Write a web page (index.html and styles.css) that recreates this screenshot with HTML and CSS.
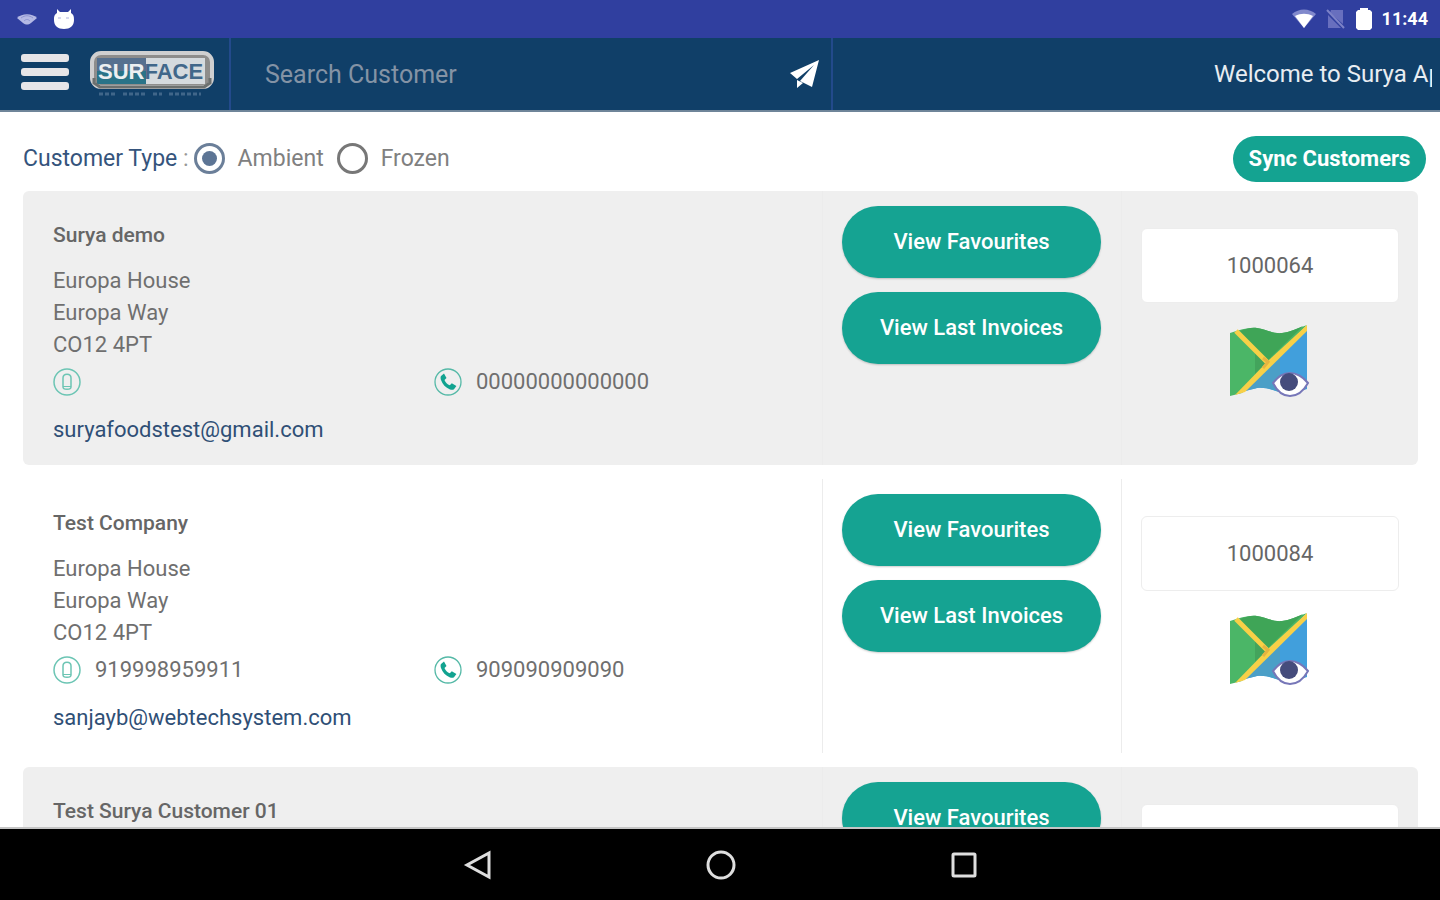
FILE: index.html
```html
<!DOCTYPE html>
<html lang="en">

<head>
    <meta charset="UTF-8">
    <meta name="viewport" content="width=device-width, initial-scale=1.0">
    <title>Surface - Customers</title>
    <link rel="stylesheet" href="styles.css">
</head>

<body>
    <!-- shared icons -->
    <svg class="icon-defs" aria-hidden="true">
        <symbol id="icon-mobile" viewBox="0 0 28 28">
            <circle cx="14" cy="14" r="13" fill="none" stroke="#6cc5b4" stroke-width="1.5"/>
            <path d="M10 10c0-5 8-5 8 0v9c0 3-8 3-8 0z" fill="none" stroke="#6cc5b4" stroke-width="1.5"/>
            <path d="M10 18.5h8" stroke="#6cc5b4"/>
        </symbol>
        <symbol id="icon-phone" viewBox="0 0 28 28">
            <circle cx="14" cy="14" r="13" fill="none" stroke="#55b9a7" stroke-width="1.3"/>
            <path d="M7 8l3-2.500 2.500 4.500-2 2c1 2.500 2.800 4.300 5.300 5.300l2-2 4.600 2.700-2.400 3.200c-1 .8-2.500.8-4 .2C11.500 19.500 8.500 16.500 7 12c-.5-1.500-.6-3 0-4z" fill="#12a390"/>
        </symbol>
        <symbol id="icon-map" viewBox="0 0 80 74">
            <path d="M0 8C10 5 19 2 27 3s16 6 25 5 16-5 25-8L38 40 12 68 0 71z" fill="#4bb667"/>
            <path d="M10 6c6-2 11-4 17-3 9 1 16 6 25 5 8-1 14-4 21-7L37 36z" fill="#3fa557"/>
            <path d="M25 28l11 10-11 11z" fill="#43a45c"/>
            <path d="M77 4v60c-9 3-15 5-23 4s-16-6-27-5l-12 3z" fill="#419fdc"/>
            <path d="M50 31v36c-8-2-13-5-23-4l-12 3z" fill="#4b9fc7"/>
            <path d="M6 6l31 31" stroke="#f8d047" stroke-width="5"/>
            <path d="M77 0v6L15 67l-10 3 35-36z" fill="#f8d047"/>
            <path d="M33 33l5 4-5 6" fill="none" stroke="#e6b441" stroke-width="3"/>
            <path d="M43 58c6-7 10-10 17-10s13 4 18 10c-5 9-11 13-18 13s-13-5-17-13z" fill="#fff" stroke="#7777b8" stroke-width="2"/>
            <circle cx="59" cy="57" r="9" fill="#454c7c"/>
        </symbol>
    </svg>

    <div class="status-bar">
        <svg class="status-icons" width="60" height="24" viewBox="0 0 60 24">
            <path d="M1 11c5-5 15-5 20 0l-6 5c-3 2-5 2-8 0z" fill="#b4b9e4"/>
            <path d="M5 11c4-3 8-3 12 0M8 14c2-2 4-2 6 0" fill="none" stroke="#8d94d2"/>
            <path d="M41 2l3 3h8l3-3v4c3 2 3 4 3 7 0 6-4 9-10 9s-10-3-10-9c0-3 0-5 3-7z" fill="#fff"/>
            <path d="M42 11h3M50 11h3" stroke="#aeb3df"/>
        </svg>
        <div class="status-right">
            <svg width="24" height="20" viewBox="0 0 24 20">
                <path d="M0 5C7-1 17-1 24 5L12 19z" fill="#8189cc"/>
                <path d="M3 7c6-3 12-3 18 0l-9 12z" fill="#fff"/>
            </svg>
            <svg width="20" height="20" viewBox="0 0 20 20">
                <path d="M5 1h12v14L4 4zM2 6l13 13H2z" fill="#686fbe"/>
                <path d="M1 1l17 18" stroke="#7c82c7" stroke-width="2"/>
            </svg>
            <svg width="16" height="22" viewBox="0 0 16 22">
                <path d="M4 0h8v2h2l2 2v16l-2 2H2l-2-2V4l2-2h2z" fill="#fff"/>
            </svg>
            <span class="clock">11:44</span>
        </div>
    </div>

    <header class="header">
        <div class="brand">
            <button class="menu-button" type="button" aria-label="Menu">
                <span></span>
                <span></span>
                <span></span>
            </button>
            <svg class="logo" width="126" height="50" viewBox="0 0 126 50">
                <rect x="3" y="4" width="120" height="34" rx="9" fill="#8e8d8c" stroke="#cfcfd0" stroke-width="4"/>
                <path d="M8 9h49v26H8z" fill="#56708f"/>
                <path d="M8 22h49v13H8z" fill="#2a7388"/>
                <path d="M57 9h59v26H57z" fill="#d5dade"/>
                <path d="M5 29v5l6 4h104l6-4v-5" fill="none" stroke="#6c706f" stroke-width="3"/>
                <text class="logo-text" x="9" y="30" fill="#eceff1">SUR<tspan fill="#41678a">FACE</tspan></text>
                <path d="M10 45h16M34 45h24M64 45h9M80 45h32" stroke="#406689" stroke-width="3" stroke-dasharray="4 2"/>
            </svg>
        </div>
        <form class="search">
            <input class="search-input" type="text" placeholder="Search Customer" aria-label="Search Customer">
            <button class="send-button" type="button" aria-label="Search">
                <svg width="30" height="30" viewBox="0 0 30 30">
                    <path d="M30 1L1 14l7 6L25 6 11 22l12 6zM8 21v8l6-5z" fill="#fff"/>
                </svg>
            </button>
        </form>
        <div class="welcome">Welcome to Surya Ap</div>
    </header>

    <main class="content">
        <div class="toolbar">
            <fieldset class="customer-type">
                <legend class="type-label">Customer Type <span>:</span></legend>
                <label><input type="radio" name="type" checked>Ambient</label>
                <label><input type="radio" name="type">Frozen</label>
            </fieldset>
            <button class="sync-button" type="button">Sync Customers</button>
        </div>

        <div class="customer-list">
            <article class="customer shaded">
                <div class="info">
                    <h2>Surya demo</h2>
                    <address>Europa House<br>Europa Way<br>CO12 4PT</address>
                    <div class="phones">
                        <div class="phone"><svg><use href="#icon-mobile"/></svg></div>
                        <div class="phone"><svg><use href="#icon-phone"/></svg>00000000000000</div>
                    </div>
                    <a class="email" href="mailto:suryafoodstest@gmail.com">suryafoodstest@gmail.com</a>
                </div>
                <div class="actions">
                    <button class="action-button" type="button">View Favourites</button>
                    <button class="action-button" type="button">View Last Invoices</button>
                </div>
                <div class="account">
                    <input class="code" type="text" value="1000064" aria-label="Customer code" readonly>
                    <button class="map-button" type="button" aria-label="View map"><svg><use href="#icon-map"/></svg></button>
                </div>
            </article>

            <article class="customer">
                <div class="info">
                    <h2>Test Company</h2>
                    <address>Europa House<br>Europa Way<br>CO12 4PT</address>
                    <div class="phones">
                        <div class="phone"><svg><use href="#icon-mobile"/></svg>919998959911</div>
                        <div class="phone"><svg><use href="#icon-phone"/></svg>909090909090</div>
                    </div>
                    <a class="email" href="mailto:sanjayb@webtechsystem.com">sanjayb@webtechsystem.com</a>
                </div>
                <div class="actions">
                    <button class="action-button" type="button">View Favourites</button>
                    <button class="action-button" type="button">View Last Invoices</button>
                </div>
                <div class="account">
                    <input class="code" type="text" value="1000084" aria-label="Customer code" readonly>
                    <button class="map-button" type="button" aria-label="View map"><svg><use href="#icon-map"/></svg></button>
                </div>
            </article>

            <article class="customer shaded">
                <div class="info">
                    <h2>Test Surya Customer 01</h2>
                </div>
                <div class="actions">
                    <button class="action-button" type="button">View Favourites</button>
                </div>
                <div class="account">
                    <input class="code" type="text" aria-label="Customer code" readonly>
                </div>
            </article>
        </div>
    </main>

    <nav class="nav-bar">
        <button type="button" aria-label="Back">
            <svg width="32" height="32" viewBox="0 0 32 32"><path d="M28 4v24L6 16z"/></svg>
        </button>
        <button type="button" aria-label="Home">
            <svg width="32" height="32" viewBox="0 0 32 32"><circle cx="17" cy="16" r="13"/></svg>
        </button>
        <button type="button" aria-label="Recent apps">
            <svg width="32" height="32" viewBox="0 0 32 32"><rect x="6" y="5" width="22" height="22" rx="1"/></svg>
        </button>
    </nav>
</body>

</html>
```
FILE: styles.css
```css
* {
    box-sizing: border-box;
}

body {
    margin: 0;
    height: 100vh;
    display: flex;
    flex-direction: column;
    overflow: hidden;
    background-color: white;
    color: #6f6f6f;
    font-family: Roboto, sans-serif;
    font-size: 22px;
    line-height: 32px;
}

button,
input {
    font: inherit;
    border: none;
    margin: 0;
}

button {
    padding: 0;
    background: none;
    cursor: pointer;
}

svg {
    display: block;
    flex-shrink: 0;
}

.icon-defs {
    position: absolute;
    width: 0;
    height: 0;
}

/* status bar */
.status-bar {
    display: flex;
    justify-content: space-between;
    align-items: center;
    flex-shrink: 0;
    height: 38px;
    padding: 0 12px 0 16px;
    background-color: #303f9f;
}

.status-right {
    display: flex;
    align-items: center;
    gap: 10px;
}

.clock {
    color: white;
    font-size: 18px;
    font-weight: 700;
}

/* header */
.header {
    display: flex;
    flex-shrink: 0;
    height: 74px;
    background-color: #103f68;
    border-bottom: 2px solid #6f8599;
}

.brand {
    display: flex;
    align-items: center;
    gap: 20px;
    width: 231px;
    padding-left: 21px;
    border-right: 2px solid #234a8b;
}

.menu-button {
    display: flex;
    flex-direction: column;
    gap: 6px;
    width: 48px;
    padding-bottom: 4px;
}

.menu-button span {
    height: 8px;
    border-radius: 3px;
    background-color: #e6e5e8;
}

.logo-text {
    font-family: "Liberation Sans", sans-serif;
    font-size: 22px;
    font-weight: 700;
}

.search {
    display: flex;
    align-items: center;
    width: 602px;
    padding: 0 12px 0 34px;
    border-right: 2px solid #234a8b;
}

.search-input {
    flex: 1;
    min-width: 0;
    padding: 2px 0 0;
    background: none;
    color: white;
    font-size: 25px;
    outline: none;
}

.search-input::placeholder {
    color: #8493a5;
}

.welcome {
    width: 218px;
    margin: auto 8px auto auto;
    overflow: hidden;
    white-space: nowrap;
    color: #e8edf2;
    font-size: 24px;
}

/* customer type and sync */
.content {
    flex: 1;
    min-height: 0;
    overflow: hidden;
    padding: 0 22px 0 23px;
    border-bottom: 2px solid #c5c5c5;
}

.toolbar {
    display: flex;
    align-items: center;
    justify-content: space-between;
    height: 79px;
    padding-top: 14px;
    margin-right: -8px;
}

.customer-type {
    display: flex;
    align-items: center;
    gap: 13px;
    margin: 0;
    padding: 0;
    border: none;
    font-size: 23px;
}

.type-label {
    float: left;
    padding: 0;
    margin-right: -8px;
    color: #35547c;
}

.type-label span {
    color: #999;
}

.customer-type label {
    display: flex;
    align-items: center;
    gap: 13px;
    color: #808080;
}

.customer-type input {
    appearance: none;
    display: grid;
    place-items: center;
    width: 31px;
    height: 31px;
    border: 3px solid #777;
    border-radius: 50%;
}

.customer-type input:checked {
    border-color: #6b7f99;
}

.customer-type input:checked::before {
    content: "";
    width: 15px;
    height: 15px;
    border-radius: 50%;
    background-color: #5d7595;
}

.sync-button {
    width: 193px;
    height: 46px;
    border-radius: 23px;
    background-color: #14a391;
    color: white;
    font-weight: 700;
}

/* customer cards */
.customer-list {
    display: grid;
    gap: 14px;
}

.customer {
    display: grid;
    grid-template-columns: 1fr 300px 296px;
    min-height: 274px;
    border-radius: 6px;
}

.shaded {
    background-color: #efefef;
}

.info {
    padding: 28px 30px 18px;
}

.info h2 {
    margin: 0 0 14px;
    color: #666;
    font-size: 21px;
    font-weight: 500;
}

.info address {
    font-style: normal;
}

.phones {
    display: grid;
    grid-template-columns: 381px 1fr;
    margin: 5px 0 16px;
}

.phone {
    display: flex;
    align-items: center;
    gap: 14px;
    height: 32px;
}

.phone svg {
    width: 28px;
    height: 28px;
}

.email {
    display: block;
    color: #2f4f76;
    text-decoration: none;
}

.actions {
    display: flex;
    flex-direction: column;
    gap: 14px;
    padding: 15px 20px 15px 19px;
    border-left: 1px solid #ececec;
    border-right: 1px solid #ececec;
}

.action-button {
    height: 72px;
    border-radius: 36px;
    background-color: #15a392;
    box-shadow: 0 1px 2px rgba(0, 0, 0, 0.2);
    color: white;
    font-weight: 500;
}

.account {
    display: flex;
    flex-direction: column;
    align-items: center;
    gap: 22px;
    padding: 37px 19px 0;
}

.code {
    width: 100%;
    height: 75px;
    border: 1px solid #ededed;
    border-radius: 6px;
    background-color: white;
    color: #666;
    text-align: center;
}

.map-button svg {
    width: 80px;
    height: 74px;
}

/* bottom navigation */
.nav-bar {
    display: flex;
    justify-content: center;
    align-items: center;
    gap: 211px;
    flex-shrink: 0;
    height: 71px;
    background-color: black;
}

.nav-bar svg {
    fill: none;
    stroke: #dedede;
    stroke-width: 3;
}
```
